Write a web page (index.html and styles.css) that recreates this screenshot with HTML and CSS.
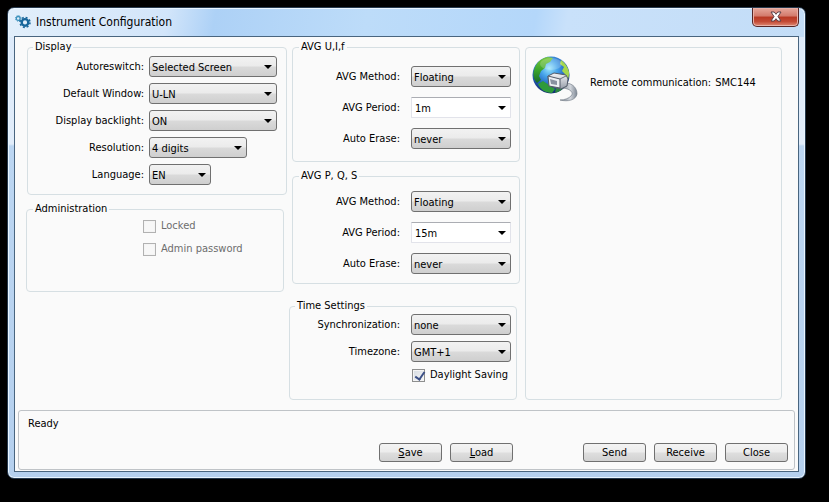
FILE: index.html
```html
<!DOCTYPE html>
<html lang="en">
<head>
  <meta charset="UTF-8">
  <title>Instrument Configuration</title>
  <link rel="stylesheet" href="styles.css">
</head>
<body>

<div class="window">
  <header class="titlebar">
    <svg class="gears" width="16" height="14" viewBox="0 0 16 14">
      <circle cx="3.2" cy="3.4" r="1.9" fill="none" stroke="#3f93bd" stroke-width="1.3"/>
      <circle cx="3.2" cy="3.4" r="2.8" fill="none" stroke="#3f93bd" stroke-width="1" stroke-dasharray="1.1 1.1"/>
      <circle cx="10" cy="7.4" r="3.3" fill="none" stroke="#17669b" stroke-width="2.4"/>
      <circle cx="10" cy="7.4" r="5" fill="none" stroke="#17669b" stroke-width="1.5" stroke-dasharray="2 1.93"/>
    </svg>
    <h1>Instrument Configuration</h1>
    <button class="close-x" aria-label="Close window">
      <svg width="14" height="12" viewBox="0 0 14 12">
        <path d="M2 1H5.200L7 3.300L8.800 1H12L9 5.500L12 10H8.800L7 7.700L5.200 10H2L5 5.500Z" fill="#fff" stroke="#5a4048" stroke-width="1"/>
      </svg>
    </button>
  </header>

  <main class="client">
    <div class="columns">
      <div class="column">
        <fieldset class="display">
          <legend>Display</legend>
          <div class="row">
            <label for="autoreswitch">Autoreswitch:</label>
            <span class="combo"><select id="autoreswitch"><option>Selected Screen</option></select></span>
          </div>
          <div class="row">
            <label for="window">Default Window:</label>
            <span class="combo"><select id="window"><option>U-LN</option></select></span>
          </div>
          <div class="row">
            <label for="backlight">Display backlight:</label>
            <span class="combo"><select id="backlight"><option>ON</option><option>OFF</option></select></span>
          </div>
          <div class="row">
            <label for="resolution">Resolution:</label>
            <span class="combo medium"><select id="resolution"><option>4 digits</option></select></span>
          </div>
          <div class="row">
            <label for="language">Language:</label>
            <span class="combo small"><select id="language"><option>EN</option></select></span>
          </div>
        </fieldset>

        <fieldset class="admin">
          <legend>Administration</legend>
          <label class="check disabled"><input type="checkbox" disabled>Locked</label>
          <label class="check disabled"><input type="checkbox" disabled>Admin password</label>
        </fieldset>
      </div>

      <div class="column">
        <fieldset class="avg">
          <legend>AVG U,I,f</legend>
          <div class="row">
            <label for="uif-method">AVG Method:</label>
            <span class="combo"><select id="uif-method"><option>Floating</option></select></span>
          </div>
          <div class="row">
            <label for="uif-period">AVG Period:</label>
            <span class="combo editable"><select id="uif-period"><option>1m</option><option>15m</option></select></span>
          </div>
          <div class="row">
            <label for="uif-erase">Auto Erase:</label>
            <span class="combo"><select id="uif-erase"><option>never</option></select></span>
          </div>
        </fieldset>

        <fieldset class="avg">
          <legend>AVG P, Q, S</legend>
          <div class="row">
            <label for="pqs-method">AVG Method:</label>
            <span class="combo"><select id="pqs-method"><option>Floating</option></select></span>
          </div>
          <div class="row">
            <label for="pqs-period">AVG Period:</label>
            <span class="combo editable"><select id="pqs-period"><option>15m</option><option>1m</option></select></span>
          </div>
          <div class="row">
            <label for="pqs-erase">Auto Erase:</label>
            <span class="combo"><select id="pqs-erase"><option>never</option></select></span>
          </div>
        </fieldset>

        <fieldset class="time">
          <legend>Time Settings</legend>
          <div class="row">
            <label for="sync">Synchronization:</label>
            <span class="combo"><select id="sync"><option>none</option></select></span>
          </div>
          <div class="row">
            <label for="timezone">Timezone:</label>
            <span class="combo"><select id="timezone"><option>GMT+1</option></select></span>
          </div>
          <label class="check"><input type="checkbox" checked>Daylight Saving</label>
        </fieldset>
      </div>

      <section class="remote">
        <svg class="globe" width="48" height="48" viewBox="0 0 48 48">
          <defs>
            <radialGradient id="sea" cx="45%" cy="32%" r="65%">
              <stop offset="0" stop-color="#9be6fc"/>
              <stop offset="0.35" stop-color="#45a3ea"/>
              <stop offset="0.75" stop-color="#1f57b6"/>
              <stop offset="1" stop-color="#142f74"/>
            </radialGradient>
            <linearGradient id="land" x1="0" y1="0" x2="0" y2="1">
              <stop offset="0" stop-color="#7cc93a"/>
              <stop offset="0.5" stop-color="#3ba52c"/>
              <stop offset="1" stop-color="#176b2b"/>
            </linearGradient>
            <linearGradient id="plug" x1="0" y1="0" x2="0" y2="1">
              <stop offset="0" stop-color="#f5f6f8"/>
              <stop offset="1" stop-color="#959ca8"/>
            </linearGradient>
            <linearGradient id="cable" x1="0" y1="0" x2="1" y2="0">
              <stop offset="0" stop-color="#6f7884"/>
              <stop offset="0.6" stop-color="#d3d7dd"/>
              <stop offset="1" stop-color="#7d8794"/>
            </linearGradient>
          </defs>
          <circle cx="19" cy="20" r="18.500" fill="url(#sea)"/>
          <path d="M2 15C4 8 9 3 16 2L21 3L18 7L14 9L13 13L9 16L7 21L9 25L5 28C1 24 1 19 2 15Z" fill="url(#land)"/>
          <path d="M29 5C33 8 36 12 37 17C37 20 37 23 35 26L31 23L33 19L30 16L32 12L28 9Z" fill="#a5d84c"/>
          <path d="M6 29L11 26L17 30L23 34L20 38C13 38 8 34 6 29Z" fill="#2f9a3a"/>
          <path d="M24 33L32 32C30 35 27 37 23 38Z" fill="#2b8740"/>
          <ellipse cx="19" cy="9" rx="11" ry="6" fill="#fff" opacity="0.2"/>
          <path d="M31 33C39 34 42 38 39 41C37 43 33 45 28 45C36 47 44 45 45 39C45 33 41 29 35 28Z" fill="url(#cable)" stroke="#6b7581" stroke-width="0.600"/>
          <path d="M16 21L22 18L34 20L36 24L35 31L29 34L17 31Z" fill="url(#plug)" stroke="#525b69" stroke-width="1"/>
          <path d="M16 21L28 24L28 33L17 31Z" fill="#eceff3" stroke="#535b68" stroke-width="1"/>
          <path d="M18 24L25 26V30L19 29Z" fill="#8992a1"/>
          <path d="M28 24L34 21" stroke="#69717f" stroke-width="1"/>
        </svg>
        <span>Remote communication:</span>
        <span>SMC144</span>
      </section>
    </div>

    <footer class="status">
      <p>Ready</p>
      <div class="buttons">
        <button><u>S</u>ave</button>
        <button><u>L</u>oad</button>
        <button class="send">Send</button>
        <button>Receive</button>
        <button>Close</button>
      </div>
    </footer>
  </main>
</div>

</body>
</html>
```
FILE: styles.css
```css
* {
  box-sizing: border-box;
}

body {
  margin: 0;
  padding: 7px 23px 23px 7px;
  background: #000;
  color: #000;
  font-family: "DejaVu Sans Condensed", "DejaVu Sans", sans-serif;
  font-size: 11px;
  line-height: 14px;
}

/* window frame */
.window {
  padding: 0 6px 6px;
  border: 1px solid #26394d;
  border-radius: 7px;
  background:
    linear-gradient(100deg, #e2effb 0, #d2e5fa 20%, #add1f6 26%, #bddcf9 45%, #b4d7fa 66%, #c9e1fa 70%, #c3ddf7 100%) 0 0 / 100% 29px no-repeat,
    linear-gradient(#dceafa 0, #e2edfa 136px, #bcd6f2 138px, #b5d0ee 100%);
  box-shadow: inset 0 0 0 1px #e9f5ff;
}

.titlebar {
  display: flex;
  align-items: center;
  height: 28px;
}

.gears {
  margin: 0 5px 0 1px;
}

.titlebar h1 {
  flex: 1;
  margin: 0;
  font-size: 12px;
  font-weight: normal;
}

.close-x {
  display: flex;
  justify-content: center;
  align-items: center;
  align-self: flex-start;
  width: 47px;
  height: 19px;
  padding: 0;
  border: 1px solid #562626;
  border-top: none;
  border-radius: 0 0 5px 5px;
  background: linear-gradient(#e6a79b 0, #d37a6b 45%, #b83823 50%, #c34a35 75%, #df8a75 100%);
  box-shadow: inset 0 0 0 1px #e9b1a7;
}

.client {
  border: 1px solid #49657f;
  background: #fafafa;
}

.columns {
  display: grid;
  grid-template-columns: 260fr 228fr 258fr;
  gap: 5px;
  padding: 3px 16px 10px 12px;
}

/* group boxes */
fieldset {
  min-width: 0;
  margin: 0;
  padding: 2px 9px 9px;
  border: 1px solid #d6dfe3;
  border-radius: 4px;
}

legend {
  margin-left: -4px;
  padding: 0 2px;
}

.row {
  display: flex;
  align-items: center;
  gap: 5px;
  margin-bottom: 6px;
}

.row > label {
  width: 107px;
  text-align: right;
}

.row:last-child {
  margin-bottom: 0;
}

.admin {
  min-height: 90px;
  margin: 7px 3px 0 -1px;
  padding: 2px 10px;
}

.avg {
  margin-bottom: 7px;
  padding: 12px 8px 12px 10px;
}

.avg + .avg {
  padding-top: 8px;
  padding-bottom: 9px;
}

.avg .row {
  margin-bottom: 10px;
}

.avg .row:last-child {
  margin-bottom: 0;
}

.time {
  margin: 15px 3px 0 -3px;
  padding: 1px 5px 17px 9px;
}

.avg .row,
.time .row {
  gap: 11px;
}

.avg .row > label {
  width: 97px;
}

.time .row > label {
  width: 101px;
}

/* drop-downs */
.combo {
  position: relative;
  width: 128px;
}

.combo.medium {
  width: 98px;
}

.combo.small {
  width: 62px;
}

.avg .combo,
.time .combo {
  width: 100px;
}

.combo::after {
  content: "";
  position: absolute;
  top: 9px;
  right: 5px;
  border: 4px solid transparent;
  border-top-color: #000;
  border-bottom: none;
  pointer-events: none;
}

select {
  display: block;
  width: 100%;
  height: 21px;
  padding: 2px 16px 0 2px;
  border: 1px solid #707070;
  border-radius: 3px;
  background: linear-gradient(#f2f2f2 0, #ebebeb 48%, #dadada 52%, #cfcfcf 100%);
  color: #000;
  font: inherit;
  appearance: none;
}

.editable select {
  padding-left: 3px;
  border-color: #e2e3ea;
  border-top-color: #abadb3;
  border-radius: 1px;
  background: #fff;
}

/* tick boxes */
.check {
  display: flex;
  align-items: center;
  gap: 5px;
  margin-top: 6px;
}

.admin .check {
  margin: 0 0 9px 106px;
}

.admin legend + .check {
  margin-top: 1px;
}

.time .check {
  margin-left: 113px;
}

.check.disabled {
  color: #6d6d6d;
}

.check input {
  width: 13px;
  height: 13px;
  margin: 0;
  border: 1px solid #8e8f8f;
  background: linear-gradient(135deg, #d5dbe2, #f6f6f6);
  box-shadow: inset 0 0 0 1px #f4f4f4;
  appearance: none;
}

.check input:checked::after {
  content: "";
  display: block;
  width: 4px;
  height: 8px;
  margin: 0 0 0 4px;
  border: solid #3b4f86;
  border-width: 0 2px 2px 0;
  transform: rotate(35deg);
}

.check input:disabled {
  border-color: #b1b1b1;
  background: #f7f7f7;
}

.remote {
  display: flex;
  align-items: flex-start;
  gap: 4px;
  margin-top: 7px;
  padding: 7px 6px;
  border: 1px solid #d6dfe3;
  border-radius: 4px;
}

.remote span {
  margin-top: 21px;
}

.globe {
  flex: none;
  margin-right: 6px;
}

/* status bar */
.status {
  margin: 0 3px 1px;
  padding: 6px 6px 7px 9px;
  border: 1px solid #bfc3c7;
  border-radius: 3px;
}

.status p {
  margin: 0 0 12px;
}

.buttons {
  display: flex;
  justify-content: flex-end;
  gap: 8px;
}

.buttons button {
  width: 63px;
  height: 19px;
  padding: 1px 0 0;
  border: 1px solid #707070;
  border-radius: 3px;
  background: linear-gradient(#f3f3f3 0, #ececec 48%, #dedede 52%, #d2d2d2 100%);
  color: #000;
  font: inherit;
}

.buttons .send {
  margin-left: 62px;
}
```
